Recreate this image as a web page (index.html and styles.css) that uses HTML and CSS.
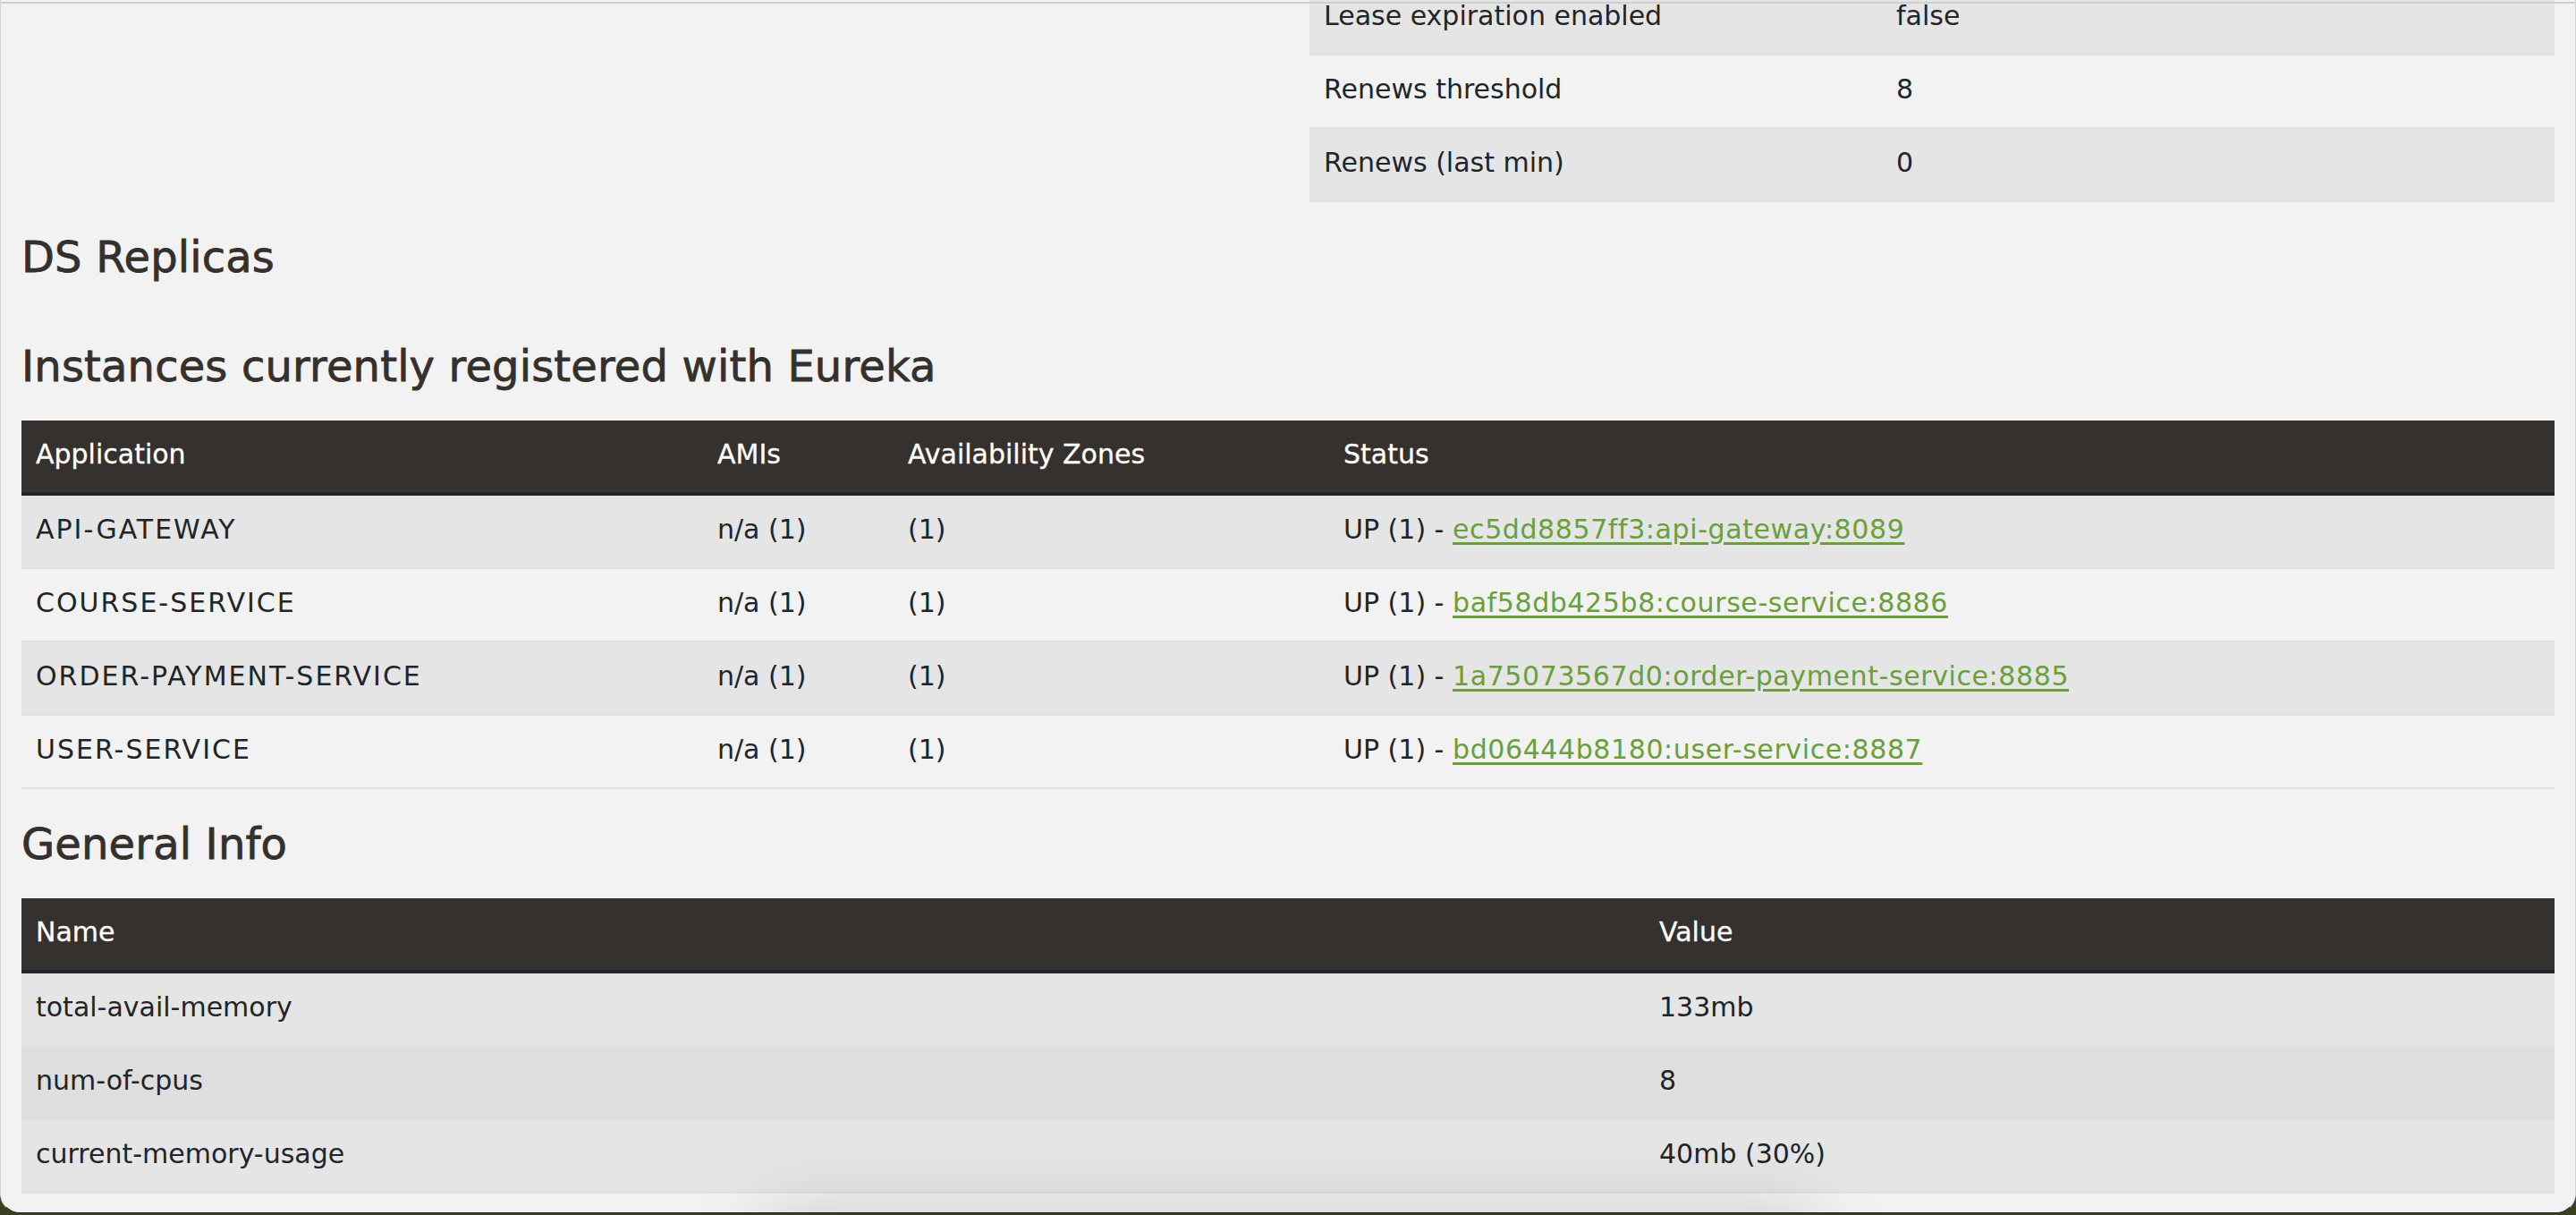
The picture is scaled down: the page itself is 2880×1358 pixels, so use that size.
FILE: index.html
```html
<!DOCTYPE html>
<html lang="en">
<head>
<meta charset="utf-8">
<title>Eureka</title>
<link rel="stylesheet" href="styles.css">
</head>
<body>
<div class="window">
  <div class="topline"></div>
  <main class="page">
    <div class="status-grid">
      <div class="status-col"></div>
      <div class="status-col">
        <table class="tbl">
          <colgroup><col class="kv-name"><col></colgroup>
          <tbody>
            <tr><td>Lease expiration enabled</td><td>false</td></tr>
            <tr><td>Renews threshold</td><td>8</td></tr>
            <tr><td>Renews (last min)</td><td>0</td></tr>
          </tbody>
        </table>
      </div>
    </div>

    <h1 class="section-title replicas">DS Replicas</h1>

    <h1 class="section-title instances-title">Instances currently registered with Eureka</h1>
    <table class="tbl block">
      <colgroup><col class="c-app"><col class="c-ami"><col class="c-az"><col></colgroup>
      <thead>
        <tr><th>Application</th><th>AMIs</th><th>Availability Zones</th><th>Status</th></tr>
      </thead>
      <tbody>
        <tr><td class="app">API-GATEWAY</td><td>n/a (1)</td><td>(1)</td><td>UP (1) - <a href="#">ec5dd8857ff3:api-gateway:8089</a></td></tr>
        <tr><td class="app">COURSE-SERVICE</td><td>n/a (1)</td><td>(1)</td><td>UP (1) - <a href="#">baf58db425b8:course-service:8886</a></td></tr>
        <tr><td class="app">ORDER-PAYMENT-SERVICE</td><td>n/a (1)</td><td>(1)</td><td>UP (1) - <a href="#">1a75073567d0:order-payment-service:8885</a></td></tr>
        <tr><td class="app">USER-SERVICE</td><td>n/a (1)</td><td>(1)</td><td>UP (1) - <a href="#">bd06444b8180:user-service:8887</a></td></tr>
      </tbody>
    </table>

    <h1 class="section-title">General Info</h1>
    <table class="tbl block">
      <colgroup><col class="c-name"><col></colgroup>
      <thead>
        <tr><th>Name</th><th>Value</th></tr>
      </thead>
      <tbody>
        <tr><td>total-avail-memory</td><td>133mb</td></tr>
        <tr class="hover"><td>num-of-cpus</td><td>8</td></tr>
        <tr><td>current-memory-usage</td><td>40mb (30%)</td></tr>
      </tbody>
    </table>
  </main>
  <div class="dock-shadow"></div>
</div>
</body>
</html>
```

FILE: styles.css
```css
html, body {
  margin: 0;
  padding: 0;
}

body {
  background: #3a4022;
  font-family: "DejaVu Sans", "Noto Sans", sans-serif;
  color: #212529;
  overflow: hidden;
}

.window {
  position: relative;
  height: 1355px;
  background: #f2f2f2;
  border-radius: 0 0 22px 22px;
  border-bottom: 1px solid #1f1f1f;
  border-left: 1px solid #d6d6d6;
  border-right: 1px solid #d6d6d6;
  overflow: hidden;
}

.topline {
  position: absolute;
  top: 2px;
  left: 0;
  right: 0;
  height: 2px;
  background: #cfcfcf;
  z-index: 5;
}

.page {
  display: flex;
  flex-direction: column;
  padding: 0 23px;
}

.status-grid {
  display: grid;
  grid-template-columns: 1fr 1fr;
  column-gap: 48px;
  margin-top: -20px;
}

.section-title {
  margin: 35px 0 0;
  font-family: "DejaVu Sans", "Noto Sans", sans-serif;
  font-weight: normal;
  font-size: 48px;
  line-height: 52px;
  letter-spacing: 0.15px;
  color: #34302d;
  -webkit-text-stroke: 0.8px #34302d;
}

.instances-title {
  margin-top: 70px;
}

.tbl {
  width: 100%;
  border-collapse: collapse;
  table-layout: fixed;
  font-size: 30px;
  line-height: 48px;
}

.block {
  margin-top: 35px;
}

.tbl th,
.tbl td {
  padding: 14px 16px 18px;
  text-align: left;
  white-space: nowrap;
  overflow: hidden;
}

.tbl th {
  font-weight: normal;
  color: #ffffff;
  background: #35312e;
  border-bottom: 4px solid #22262a;
  -webkit-text-stroke: 0.3px #ffffff;
}

.tbl td {
  border-bottom: 2px solid #dee2e6;
}

.tbl td.app {
  letter-spacing: 2px;
}

.tbl tbody tr:nth-child(odd) {
  background: #e5e5e5;
}

.tbl tbody tr.hover {
  background: #dedede;
}

.kv-name { width: 640px; }
.c-app { width: 762px; }
.c-ami { width: 213px; }
.c-az { width: 487px; }
.c-name { width: 1815px; }

.tbl a {
  color: #6a9f3c;
  letter-spacing: 0.6px;
  text-decoration: underline;
  text-decoration-thickness: 3px;
  text-underline-offset: 4px;
}

.dock-shadow {
  position: absolute;
  left: 860px;
  width: 1160px;
  top: 1385px;
  height: 80px;
  border-radius: 40px;
  box-shadow: 0 0 80px 30px rgba(0, 0, 0, 0.16);
  z-index: 4;
}
```
